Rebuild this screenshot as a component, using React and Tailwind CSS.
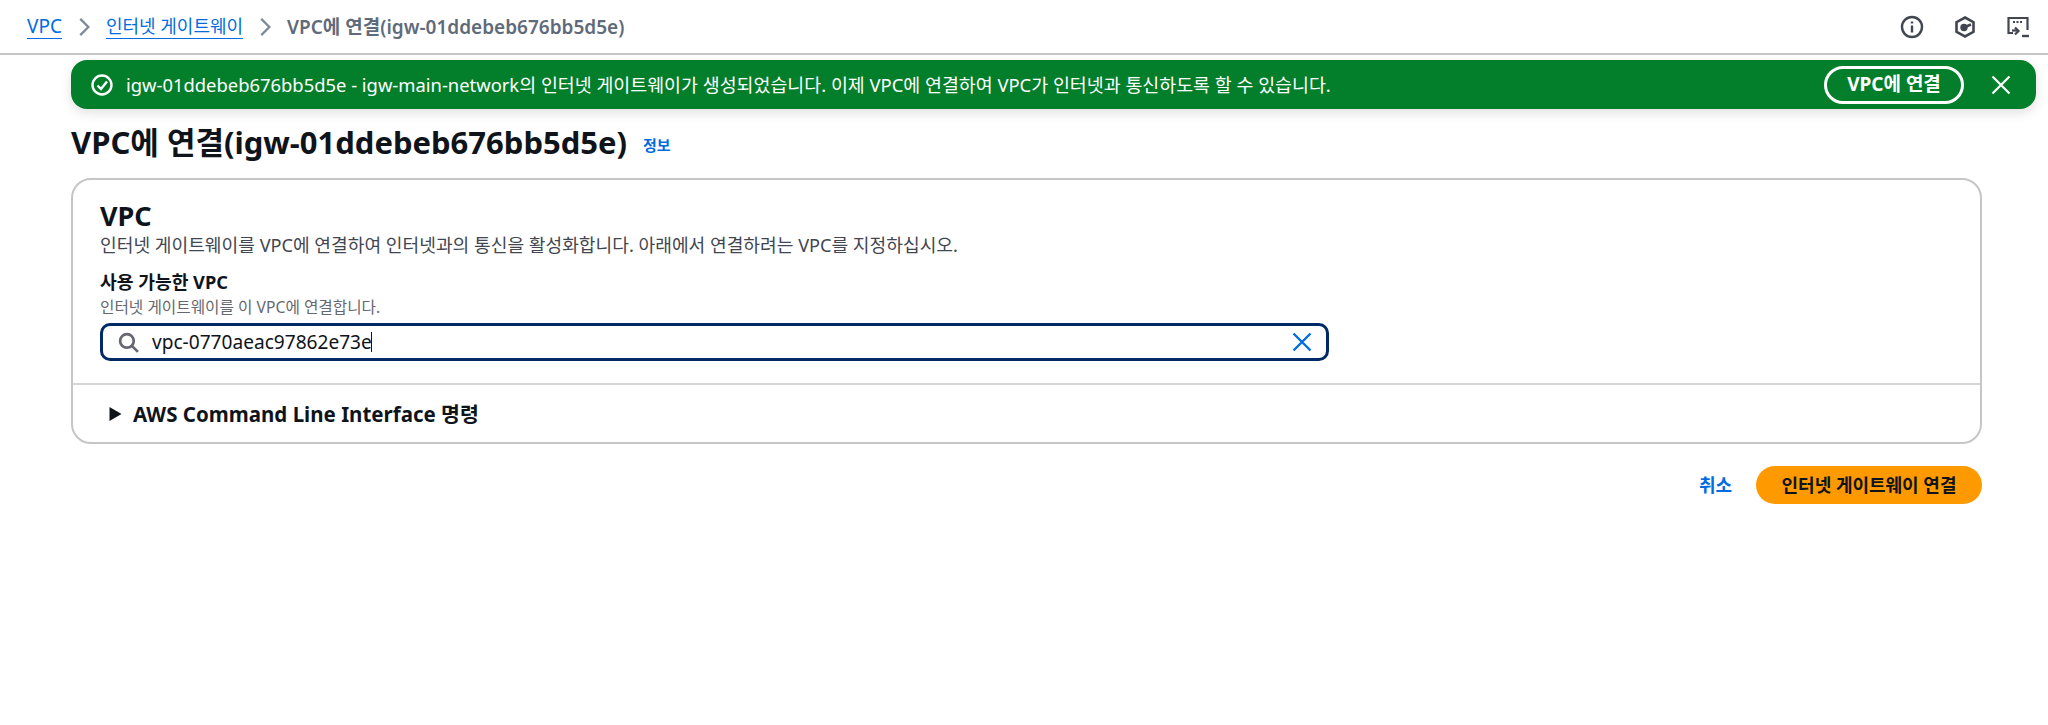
import React from "react";

const Chevron = () => (
  <svg width="20" height="20" viewBox="0 0 16 16" fill="none" stroke="#7d8998" strokeWidth="1.8" className="shrink-0">
    <path d="M5 1.5 11.5 8 5 14.5" />
  </svg>
);

export default function App() {
  return (
    <div className="w-[2048px] h-[725px] bg-white overflow-hidden text-[14px] text-[#0f141a] font-['Noto_Sans','Noto_Sans_CJK_KR',sans-serif]">
      <header className="h-[55px] border-b-2 border-[#c6c6c6] flex items-center justify-between pl-[27px] pr-[18px]">
        <nav className="flex items-center">
          <a className="text-[#006ce0] border-b border-[#006ce0] text-[19px] leading-[24px]">VPC</a>
          <span className="mx-[12px]"><Chevron /></span>
          <a className="text-[#006ce0] border-b border-[#006ce0] text-[18px] leading-[24px]">인터넷 게이트웨이</a>
          <span className="mx-[12px]"><Chevron /></span>
          <span className="text-[#5f6b7a] font-semibold text-[19px] leading-[24px]">VPC에 연결(igw-01ddebeb676bb5d5e)</span>
        </nav>
        <div className="flex items-center gap-[29px] text-[#424650]">
          <svg width="24" height="24" viewBox="0 0 24 24" fill="none" stroke="currentColor" strokeWidth="2.4">
            <circle cx="12" cy="12" r="10" />
            <path d="M12 10.5V17.5" />
            <path d="M12 6.5v2" />
          </svg>
          <svg width="24" height="24" viewBox="0 0 24 24" fill="none" stroke="currentColor" strokeWidth="2.6">
            <path d="M12 2.5 20.5 7.2v9.6L12 21.5 3.5 16.8V7.2Z" />
            <circle cx="11" cy="12.5" r="2.4" fill="currentColor" />
            <path d="M12 12l6-2.5" />
          </svg>
          <svg width="24" height="24" viewBox="0 0 24 24" fill="none" stroke="currentColor" strokeWidth="2.2">
            <path d="M7 18H2.5V3h19v12" />
            <path d="M7 7h2M10.5 7h2M14 7h2" />
            <path d="M8 11.5 11.5 15 8 18.5" transform="translate(1 1)" />
            <path d="M5 14.5h5" transform="translate(1 1)" />
            <path d="M16 21h7" strokeWidth="2.4" />
          </svg>
        </div>
      </header>

      <div className="mt-[5px] ml-[71px] mr-[12px] h-[49px] rounded-[16px] bg-[#037f2b] text-white flex items-center pl-[20px] pr-[25px] shadow-[0_4px_12px_rgba(0,7,22,0.12)]">
        <svg width="22" height="22" viewBox="0 0 22 22" fill="none" stroke="white" strokeWidth="2.4" className="shrink-0">
          <circle cx="11" cy="11" r="9.5" />
          <path d="M6.5 11.5 10 15l6-7.5" />
        </svg>
        <span className="ml-[13px] flex-1 text-[18.4px] leading-[24px] whitespace-nowrap">
          igw-01ddebeb676bb5d5e - igw-main-network의 인터넷 게이트웨이가 생성되었습니다. 이제 VPC에 연결하여 VPC가 인터넷과 통신하도록 할 수 있습니다.
        </span>
        <button className="h-[38px] w-[140px] rounded-full border-[3px] border-white text-[19px] font-bold flex items-center justify-center">
          VPC에 연결
        </button>
        <svg width="20" height="20" viewBox="0 0 20 20" fill="none" stroke="white" strokeWidth="2.2" className="ml-[27px] shrink-0">
          <path d="M1.5 1.5 18.5 18.5M18.5 1.5 1.5 18.5" />
        </svg>
      </div>

      <main className="ml-[71px] w-[1911px]">
        <div className="mt-[13px] h-[40px] flex items-center">
          <h1 className="text-[31px] leading-[40px] font-bold">VPC에 연결(igw-01ddebeb676bb5d5e)</h1>
          <a className="ml-[16px] mt-[6px] text-[#006ce0] text-[15px] font-bold">정보</a>
        </div>

        <section className="mt-[16px] h-[266px] border-2 border-[#c6c6c6] rounded-[20px] flex flex-col">
          <div className="h-[205px] px-[27px] pt-[19px] border-b-2 border-[#d5d5d5]">
            <h2 className="text-[27px] leading-[34px] font-bold">VPC</h2>
            <p className="text-[18.15px] leading-[24px] text-[#424650]">
              인터넷 게이트웨이를 VPC에 연결하여 인터넷과의 통신을 활성화합니다. 아래에서 연결하려는 VPC를 지정하십시오.
            </p>
            <div className="mt-[14px] text-[18.2px] leading-[22px] font-bold">사용 가능한 VPC</div>
            <div className="mt-[4px] text-[15.7px] leading-[20px] text-[#656871]">인터넷 게이트웨이를 이 VPC에 연결합니다.</div>
            <div className="mt-[6px] w-[1229px] h-[38px] rounded-[10px] border-[3px] border-[#002a66] flex items-center pl-[14px] pr-[14px]">
              <svg width="23" height="23" viewBox="0 0 22 22" fill="none" stroke="#656871" strokeWidth="2.6" className="shrink-0">
                <circle cx="9.5" cy="9.5" r="6.5" />
                <path d="M14 14 20 20" />
              </svg>
              <span className="ml-[12px] flex-1 text-[19.1px] leading-[24px] text-[#0f141a] flex items-center">
                vpc-0770aeac97862e73e<span className="w-px h-[20px] bg-[#0f141a] -ml-[1px]" />
              </span>
              <svg width="20" height="20" viewBox="0 0 20 20" fill="none" stroke="#006ce0" strokeWidth="2.4" className="shrink-0">
                <path d="M1.5 1.5 18.5 18.5M18.5 1.5 1.5 18.5" />
              </svg>
            </div>
          </div>
          <div className="flex-1 flex items-center pl-[36px]">
            <svg width="13" height="16" viewBox="0 0 13 16" className="shrink-0">
              <path d="M0.5 1v14L12.5 8Z" fill="#0f141a" />
            </svg>
            <span className="ml-[11px] text-[20.5px] leading-[26px] font-bold">AWS Command Line Interface 명령</span>
          </div>
        </section>

        <div className="mt-[22px] flex items-center justify-end">
          <a className="text-[#006ce0] text-[18px] font-bold">취소</a>
          <button className="ml-[24px] h-[38px] w-[226px] rounded-full bg-[#ff9900] text-[18px] font-bold text-[#0f141a]">
            인터넷 게이트웨이 연결
          </button>
        </div>
      </main>
    </div>
  );
}
